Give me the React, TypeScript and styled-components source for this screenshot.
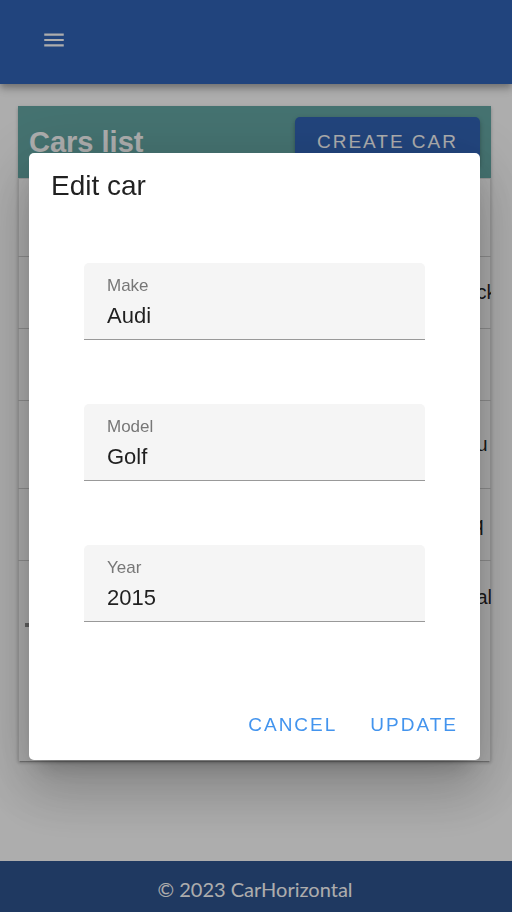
import { useState } from "react";
import styled, { createGlobalStyle } from "styled-components";
import { MdMenu } from "react-icons/md";

const GlobalStyle = createGlobalStyle`
  *, *::before, *::after { box-sizing: border-box; }
  body {
    margin: 0;
    background: #ffffff;
    color: rgba(0, 0, 0, 0.87);
    font-family: "Liberation Sans", Arial, sans-serif;
    -webkit-font-smoothing: antialiased;
  }
`;

const Page = styled.div`
  display: flex;
  flex-direction: column;
  min-height: 100vh;
`;

const TopBar = styled.header`
  display: flex;
  align-items: flex-start;
  height: 84px;
  padding: 27px 41px;
  background: #3265b8;
  box-shadow: 0 3px 6px -1px rgba(0, 0, 0, 0.2), 0 6px 7px 0 rgba(0, 0, 0, 0.14),
    0 1px 14px 0 rgba(0, 0, 0, 0.12);
`;

const MenuButton = styled.button`
  display: flex;
  padding: 0;
  border: 0;
  background: none;
  color: #ffffff;
  font-size: 26px;
  cursor: pointer;
`;

const Main = styled.main`
  flex: 1;
  padding: 22px 21px 24px 18px;
`;

const Card = styled.section`
  overflow: hidden;
  background: #ffffff;
  box-shadow: 0 3px 1px -2px rgba(0, 0, 0, 0.2), 0 2px 3px 0 rgba(0, 0, 0, 0.14),
    0 1px 4px 0 rgba(0, 0, 0, 0.12);
`;

const CardHeader = styled.div`
  display: flex;
  align-items: center;
  justify-content: space-between;
  height: 72px;
  padding: 0 11px;
  background: #66a9a6;
  color: #ffffff;
`;

const CardTitle = styled.h1`
  margin: 0;
  font-size: 29px;
  line-height: 36px;
`;

const Button = styled.button<{ $raised?: boolean }>`
  height: 50px;
  padding: 0 ${(p) => (p.$raised ? 22 : 11)}px;
  border: 0;
  border-radius: 5px;
  background: ${(p) => (p.$raised ? "#3265b8" : "transparent")};
  color: ${(p) => (p.$raised ? "#ffffff" : "#4394ee")};
  box-shadow: ${(p) =>
    p.$raised ? "0 3px 3px -1px rgba(0,0,0,.2), 0 2px 5px rgba(0,0,0,.24)" : "none"};
  font-family: inherit;
  font-size: 19px;
  letter-spacing: 2px;
  text-transform: uppercase;
  cursor: pointer;
`;

const CarsTable = styled.table`
  width: 100%;
  table-layout: fixed;
  border-collapse: collapse;
  border: 1px solid #e0e0e0;
  border-bottom: 0;
  font-size: 20px;
`;

const Row = styled.tr<{ $height: number }>`
  height: ${(p) => p.$height}px;

  & + & {
    border-top: 1px solid #d0d0d0;
  }
`;

const Cell = styled.td<{ $inset?: boolean }>`
  padding: 0 0 0 ${(p) => (p.$inset ? 4 : 0)}px;
  white-space: nowrap;

  ${Row}:last-child > & {
    padding-top: 12px;
  }
`;

const CardBottom = styled.div`
  height: 138px;
  padding: 0 6px;
  border: solid #e0e0e0;
  border-width: 0 1px;
`;

const ScrollThumb = styled.div`
  width: 60%;
  height: 4px;
  background: #8c8c8c;
`;

const Footer = styled.footer`
  display: flex;
  align-items: center;
  justify-content: center;
  height: 51px;
  padding: 4px 2px 0 0;
  background: #2f548f;
  color: #ffffff;
  font-family: Lato, sans-serif;
  font-size: 20px;
  line-height: 24px;
`;

const Scrim = styled.div`
  position: fixed;
  inset: 0;
  display: flex;
  align-items: center;
  justify-content: center;
  padding: 22px 32px 22px 29px;
  background: rgba(0, 0, 0, 0.32);
`;

const Dialog = styled.form`
  width: 100%;
  max-width: 780px;
  border-radius: 5px;
  background: #ffffff;
  box-shadow: 0 15px 21px -10px rgba(0, 0, 0, 0.2), 0 33px 53px 4px rgba(0, 0, 0, 0.14),
    0 12px 64px 11px rgba(0, 0, 0, 0.12);
`;

const DialogTitle = styled.h2`
  margin: 0;
  padding: 15px 22px 0;
  font-size: 28px;
  font-weight: 400;
  line-height: 36px;
`;

const Fields = styled.div`
  display: grid;
  gap: 64px;
  padding: 59px 55px 0;
`;

const Field = styled.label`
  display: flex;
  flex-direction: column;
  height: 77px;
  padding: 13px 23px 0;
  border-bottom: 1px solid #999999;
  border-radius: 5px 5px 0 0;
  background: #f5f5f5;
`;

const FieldName = styled.span`
  color: #777777;
  font-size: 17px;
  line-height: 20px;
`;

const FieldInput = styled.input`
  width: 100%;
  height: 40px;
  padding: 0;
  border: 0;
  outline: 0;
  background: transparent;
  color: rgba(0, 0, 0, 0.87);
  font-family: inherit;
  font-size: 22px;
`;

const Actions = styled.div`
  display: flex;
  justify-content: flex-end;
  gap: 11px;
  padding: 78px 11px 10px;
`;

const rows = [
  { text: "", height: 78 },
  { text: "ck", height: 72, inset: true },
  { text: "", height: 72 },
  { text: "u", height: 88, inset: true },
  { text: "q", height: 72 },
  { text: "al", height: 62, inset: true },
];

export default function App() {
  const [car, setCar] = useState({ Make: "Audi", Model: "Golf", Year: "2015" });
  const names = Object.keys(car) as (keyof typeof car)[];

  return (
    <>
      <GlobalStyle />
      <Page>
        <TopBar>
          <MenuButton aria-label="Menu">
            <MdMenu />
          </MenuButton>
        </TopBar>
        <Main>
          <Card>
            <CardHeader>
              <CardTitle>Cars list</CardTitle>
              <Button $raised>Create car</Button>
            </CardHeader>
            <CarsTable>
              <colgroup>
                <col />
                <col width="18" />
              </colgroup>
              <tbody>
                {rows.map((row, i) => (
                  <Row key={i} $height={row.height}>
                    <Cell />
                    <Cell $inset={row.inset}>{row.text}</Cell>
                  </Row>
                ))}
              </tbody>
            </CarsTable>
            <CardBottom>
              <ScrollThumb />
            </CardBottom>
          </Card>
        </Main>
        <Footer>© 2023 CarHorizontal</Footer>
      </Page>
      <Scrim>
        <Dialog
          role="dialog"
          aria-modal="true"
          aria-labelledby="edit-title"
          onSubmit={(e) => e.preventDefault()}
        >
          <DialogTitle id="edit-title">Edit car</DialogTitle>
          <Fields>
            {names.map((name) => (
              <Field key={name}>
                <FieldName>{name}</FieldName>
                <FieldInput
                  value={car[name]}
                  onChange={(e) => setCar({ ...car, [name]: e.target.value })}
                />
              </Field>
            ))}
          </Fields>
          <Actions>
            <Button type="button">Cancel</Button>
            <Button type="submit">Update</Button>
          </Actions>
        </Dialog>
      </Scrim>
    </>
  );
}
